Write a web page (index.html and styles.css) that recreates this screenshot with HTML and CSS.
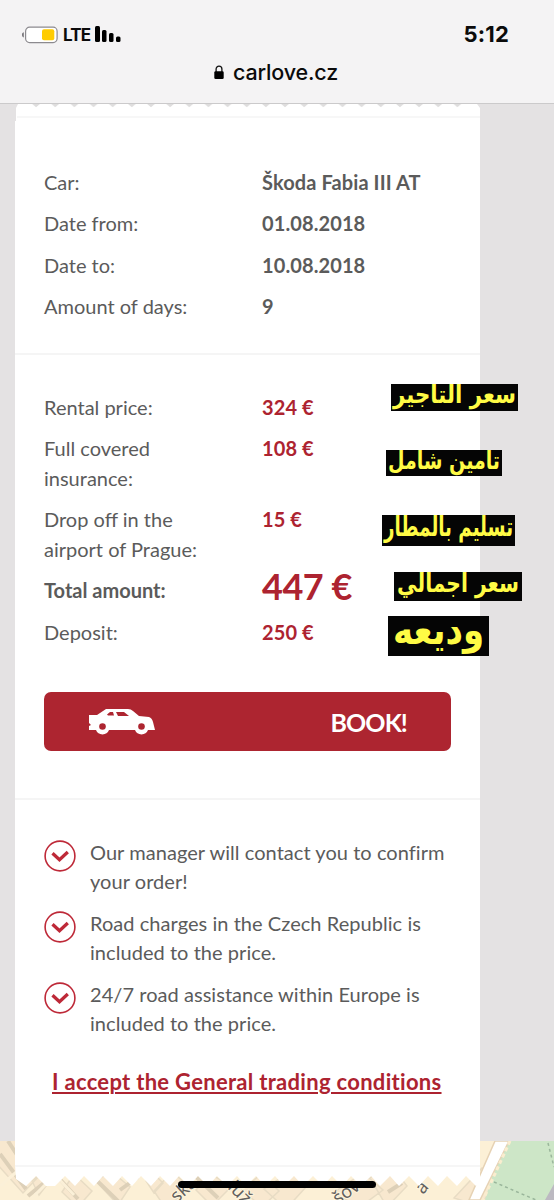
FILE: index.html
```html
<!DOCTYPE html>
<html lang="en">
<head>
<meta charset="utf-8">
<title>carlove.cz</title>
<link rel="stylesheet" href="styles.css">
</head>
<body>
<div class="screen">
  <header class="browser-bar">
    <div class="status">
      <div class="status-left">
        <svg class="battery" width="36" height="18" viewBox="0 0 36 18"><path d="M1.800 6.200v5.200C.2 11 0 10 0 8.800s.2-2.200 1.800-2.600z" fill="#77757a"/><rect x="3.600" y="1.200" width="31.500" height="15.400" rx="4" fill="#fff" stroke="#8c8a8f" stroke-width="1.200"/><rect x="20" y="3.200" width="12.300" height="11" rx="2" fill="#fc0"/></svg>
        <span class="network">LTE</span>
        <svg class="signal" width="26" height="17" viewBox="0 0 26 17"><rect x="0" y="0" width="5" height="16" rx="1.500"/><rect x="7" y="4" width="4.500" height="12" rx="1.500"/><rect x="14" y="7" width="4.500" height="9" rx="1.500"/><rect x="21" y="10.500" width="4.500" height="5.500" rx="1.500"/></svg>
      </div>
      <span class="time">5:12</span>
    </div>
    <div class="address">
      <svg width="10" height="15" viewBox="0 0 10 15"><path d="M2.100 7V4a2.900 2.900 0 0 1 5.800 0v3" fill="none" stroke="#111" stroke-width="1.300"/><rect x=".3" y="6.300" width="9.400" height="7.700" rx="1.300"/></svg>
      <span class="domain">carlove.cz</span>
    </div>
  </header>
  <svg class="map" width="554" height="59" viewBox="0 0 554 59">
    <rect width="554" height="59" fill="#fcf0d6"/>
    <g fill="#f8e8cf" stroke="#e8dcc4" stroke-width="1.500">
      <path d="M-4-3 20-4 42 32 23 52-4 22zM32 40l8-7 9 8-10 13zM62 51l12-18 18 17-14 16zM112 31l18 15-12 18-23-25zM146 40l8-7 9 9-9 10zM172 31l18 15-24 22-12-18zM210 33l22 12-20 20-16-16zM261 33l18 17-17 16-20-17zM291 30l15 16-20 22-22-20zM333 52l30-20 20 17-23 17zM370 37l20-14 17 22-20 21zM454 57l28-30 16 12-18 26zM493 51l18-21 16 13-16 23z"/>
    </g>
    <path d="M0 13l26 35M8 0l22 34M28 55 55 33 78 58M90 33l30 29M138 36 120 49M188 28l30 29M388 51l14-9" fill="none" stroke="#ddd0b8" stroke-width="4"/>
    <path d="M0 45 21 27M35 54l20-20 19 20" fill="none" stroke="#fbf0d8" stroke-width="3"/>
    <path d="M503 0h51v59h-69z" fill="#cde6c7"/>
    <path d="M495 0h14l-29 59h-11z" fill="#fff" stroke="#e6d2b4" stroke-width="1.500"/>
    <path d="M510 0l-27 59" stroke="#faedcf" stroke-width="3" stroke-dasharray="4 3"/>
    <path d="M548 2l6 24M494 41l42 18" fill="none" stroke="#9ab69b" stroke-width="1.500" stroke-dasharray="3 3"/>
    <path d="M554 43l-9 16h9z" fill="#bcb9c1"/>
    <g class="streets"><text x="177" y="62" transform="rotate(-42 177 62)">ská</text><text x="227" y="47" transform="rotate(45 227 47)">lůž</text><text x="338" y="64" transform="rotate(-35 338 64)">šova</text><text x="423" y="54" transform="rotate(-50 423 54)">a</text></g>
  </svg>
  <main class="ticket">
    <svg class="perforation" width="465" height="17" viewBox="0 0 465 17">
      <defs><pattern id="notches" x="11.500" y="0" width="19.150" height="5" patternUnits="userSpaceOnUse"><path d="M5.800 0h7.600L9.600 3.200z" fill="#dedddd"/></pattern></defs>
      <path d="M1 17V4l2-4h459l3 4v13z" fill="#fff"/><rect x="14" width="440" height="5" fill="url(#notches)"/><rect x="2" y="12" width="463" height="2" fill="#f7f7f7"/>
    </svg>
    <section class="details car">
      <div class="row"><span class="label">Car:</span><b>Škoda Fabia III AT</b></div>
      <div class="row"><span class="label">Date from:</span><b>01.08.2018</b></div>
      <div class="row"><span class="label">Date to:</span><b>10.08.2018</b></div>
      <div class="row"><span class="label">Amount of days:</span><b>9</b></div>
    </section>
    <section class="details prices">
      <div class="row"><span class="label">Rental price:</span><b>324 €</b></div>
      <div class="row"><span class="label">Full covered<br>insurance:</span><b>108 €</b></div>
      <div class="row"><span class="label">Drop off in the<br>airport of Prague:</span><b>15 €</b></div>
      <div class="row total"><span class="label">Total amount:</span><b>447 €</b></div>
      <div class="row"><span class="label">Deposit:</span><b>250 €</b></div>
      <button class="book">
        <svg width="68" height="27" viewBox="0 0 68 27"><path fill="#fff" d="M1 7h8l9-6h22q3 0 5 2l6 5 10 1q3 1 4 5l2 8h-7a7 7 0 0 1-13 0H21a7 7 0 0 1-13 0H1v-4l2-1-2-2z"/><g fill="#ad2530"><path d="M19 6.500l3-2.500h3l1 3.500h-6zM28 4h8l5 4H30z"/><circle cx="14.500" cy="18.500" r="3.300"/><circle cx="53.500" cy="18.500" r="3.300"/></g></svg>
        <span>BOOK!</span>
      </button>
    </section>
    <section class="notes">
      <div class="note"><svg class="check" viewBox="0 0 32 32"><circle cx="16" cy="16" r="14.900"/><path d="M8.500 13.200l7 6.500 8.300-7.700"/></svg><p>Our manager will contact you to confirm<br>your order!</p></div>
      <div class="note"><svg class="check" viewBox="0 0 32 32"><circle cx="16" cy="16" r="14.900"/><path d="M8.500 13.200l7 6.500 8.300-7.700"/></svg><p>Road charges in the Czech Republic is<br>included to the price.</p></div>
      <div class="note"><svg class="check" viewBox="0 0 32 32"><circle cx="16" cy="16" r="14.900"/><path d="M8.500 13.200l7 6.500 8.300-7.700"/></svg><p>24/7 road assistance within Europe is<br>included to the price.</p></div>
      <a class="terms" href="#">I accept the General trading conditions</a>
    </section>
    <div class="ticket-end"></div>
  </main>
  <svg class="tag t1" width="127" height="27"><text x="2" y="17.500" transform="scale(1 1.100)" textLength="123" lengthAdjust="spacingAndGlyphs">سعر التاجير</text></svg>
  <svg class="tag t2" width="116" height="26"><text x="2" y="17.500" transform="scale(1 1.100)" textLength="112" lengthAdjust="spacingAndGlyphs">تامين شامل</text></svg>
  <svg class="tag t3" width="133" height="31"><text x="2" y="17.500" transform="scale(1 1.200)" textLength="129" lengthAdjust="spacingAndGlyphs">تسليم بالمطار</text></svg>
  <svg class="tag t4" width="128" height="29"><text x="3" y="17.500" transform="scale(1 1.120)" textLength="122" lengthAdjust="spacingAndGlyphs">سعر اجمالي</text></svg>
  <svg class="tag t5" width="101" height="40"><text x="5" y="24" transform="scale(1 1.150)" textLength="91" lengthAdjust="spacingAndGlyphs">وديعه</text></svg>
  <div class="home-indicator"></div>
</div>
</body>
</html>
```
FILE: styles.css
```css
* { box-sizing: border-box; }
body { margin: 0; }
.screen { position: relative; width: 554px; height: 1200px; overflow: hidden; background: #e4e2e3; color: #5b5b5b; font: 20px/29.5px Lato, sans-serif; }
.browser-bar { height: 104px; padding-top: 22px; background: #f4f3f4; border-bottom: 1px solid #cbcacb; color: #0b0b0b; font-family: Inter, sans-serif; }
.status { display: flex; justify-content: space-between; height: 25px; padding: 0 45px 0 22px; align-items: center; }
.status-left { display: flex; align-items: center; }
.network { margin-left: 5px; font: 700 17px/24px Inter, sans-serif; letter-spacing: -.8px; }
.signal { margin-left: 5px; }
.time { font: 700 22px/25px Inter, sans-serif; letter-spacing: .2px; }
.address { display: flex; justify-content: center; align-items: center; gap: 9px; height: 50px; padding-right: 2px; }
.domain { font: 500 21.5px/28px Inter, sans-serif; letter-spacing: -.15px; }
.ticket { position: relative; width: 465px; margin-left: 15px; }
.perforation { display: block; }
.details { background: #fff; padding-left: 29px; }
.car { height: 232px; padding-top: 46.5px; }
.prices { height: 445px; padding-top: 37.5px; border-top: 2px solid #f5f5f5; }
.row { display: grid; grid-template-columns: 218px 1fr; margin-bottom: 12px; }
.row b { letter-spacing: .1px; }
.prices b { color: #ad2330; }
.total { height: 31px; margin-bottom: 11px; }
.total .label { font-weight: 700; }
.total b { font-size: 36px; line-height: 21px; letter-spacing: -.5px; }
.book { display: flex; align-items: center; justify-content: space-between; width: 407px; height: 59px; margin-top: 44.5px; padding: 0 44px; border: 0; border-radius: 7px; background: #ad2530; color: #fff; font: 700 25px/30px Lato, sans-serif; letter-spacing: -.9px; }
.notes { height: 367px; padding: 37.5px 29px 0; background: #fff; border-top: 2px solid #f5f5f5; }
.note { display: flex; gap: 14px; margin-bottom: 12px; white-space: nowrap; font-variant-ligatures: none; letter-spacing: .05px; }
.note p { margin: 0; }
.check { width: 32px; height: 32px; margin-top: 2px; fill: none; stroke: #be2938; stroke-width: 1.6px; }
.check path { stroke-width: 3.3px; }
.terms { display: block; margin: 28.5px 0 0 8px; color: #ad2330; font-weight: 700; font-size: 22px; letter-spacing: .3px; white-space: nowrap; text-decoration-thickness: 2px; text-underline-offset: 2px; }
.ticket-end { height: 23px; border-top: 2px solid #f6f6f6; background: #fff; clip-path: polygon(0 0,465px 0,465px 17px,461px 21px,451px 11px,442px 21px,432px 11px,423px 21px,413px 11px,404px 21px,394px 11px,384px 21px,375px 11px,365px 21px,356px 11px,346px 21px,336px 11px,327px 21px,317px 11px,308px 21px,298px 11px,288px 21px,279px 11px,269px 21px,260px 11px,250px 21px,241px 11px,231px 21px,222px 11px,212px 21px,202px 11px,193px 21px,183px 11px,174px 21px,164px 11px,155px 21px,145px 11px,136px 21px,126px 11px,117px 21px,107px 11px,98px 21px,88px 11px,79px 21px,69px 11px,60px 21px,50px 11px,40px 21px,31px 21px,21px 11px,11px 21px,1px 14px); }
.map { position: absolute; left: 0; top: 1141px; }
.streets { fill: #62605e; font: 18px "Noto Sans", sans-serif; stroke: #fff5dc; stroke-width: 2px; paint-order: stroke; }
.tag { position: absolute; background: #050505; fill: #fffb45; font: 700 23px "DejaVu Sans", sans-serif; }
.t1 { left: 391px; top: 384px; }
.t2 { left: 386px; top: 450px; }
.t3 { left: 382px; top: 515px; }
.t4 { left: 394px; top: 572px; }
.t5 { left: 388px; top: 616px; font-size: 35px; }
.home-indicator { position: absolute; left: 178px; top: 1181px; width: 198px; height: 7px; border-radius: 4px; background: #000; }
```
